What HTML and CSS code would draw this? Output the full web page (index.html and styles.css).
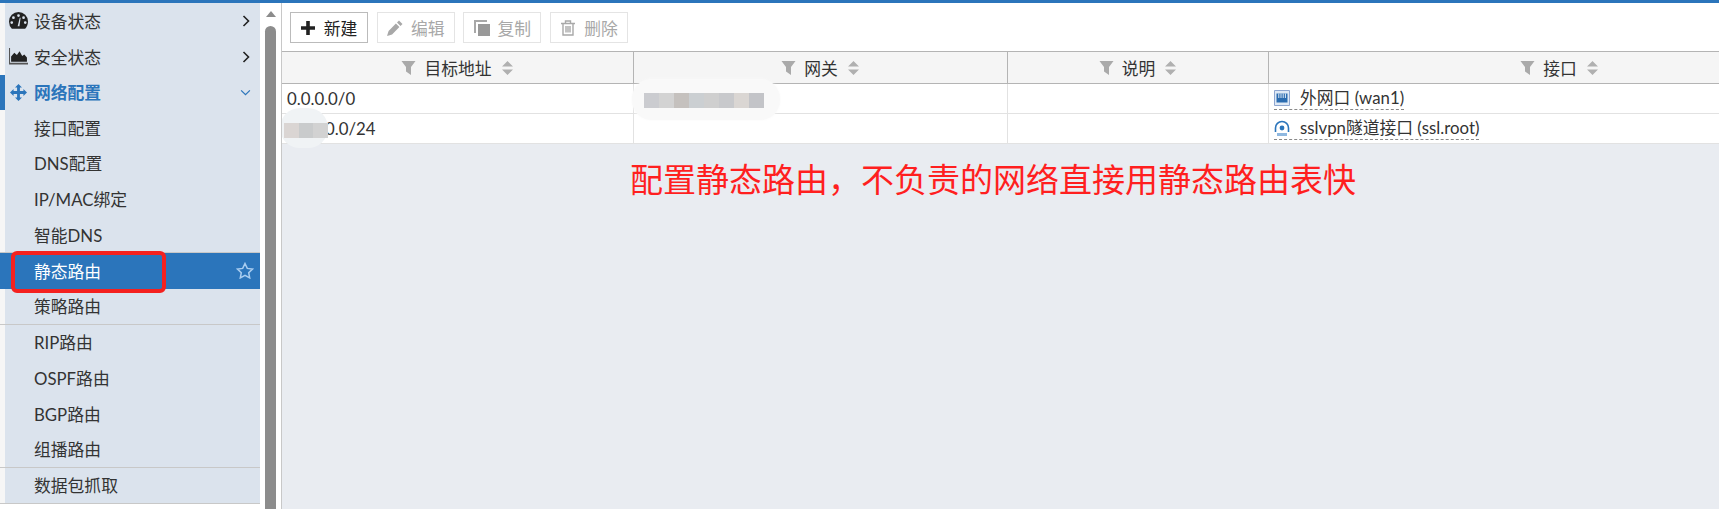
FILE: index.html
```html
<!DOCTYPE html>
<html lang="zh-CN">
<head>
  <meta charset="UTF-8" />
  <title>静态路由</title>
  <link rel="stylesheet" href="styles.css">
</head>
<body>
  <div class="top-bar"></div>
  <div class="app">

    <!-- Side menu -->
    <aside class="side-menu">
      <a class="menu-item top-level">
        <svg class="menu-icon" viewBox="0 0 18 16"><path fill="#222" fill-rule="evenodd" d="M9 0a9 9 0 0 1 9 9c0 2.600-1 5-2.700 6.800H2.700A9.800 9.800 0 0 1 0 9a9 9 0 0 1 9-9zM9 2a1.300 1.300 0 1 0 0 2.600A1.300 1.300 0 0 0 9 2zM4.200 4a1.300 1.300 0 1 0 0 2.600 1.300 1.300 0 0 0 0-2.600zM13.800 4a1.300 1.300 0 1 0 0 2.600 1.300 1.300 0 0 0 0-2.600zM2.600 8.600a1.300 1.300 0 1 0 0 2.600 1.300 1.300 0 0 0 0-2.600zM15.400 8.600a1.300 1.300 0 1 0 0 2.600 1.300 1.300 0 0 0 0-2.600zM8.200 13.400h1.700L11 5.500h-.8z"/></svg>
        <span>设备状态</span>
        <svg class="chevron" viewBox="0 0 8 12"><path fill="none" stroke="#222" stroke-width="1.600" d="M1.500 1l5 5-5 5"/></svg>
      </a>
      <a class="menu-item top-level">
        <svg class="menu-icon" viewBox="0 0 18 16"><path fill="#555" d="M0 0h1v14h17v1.500H0z"/><path fill="#222" d="M2 13V8l3-3.500 2.500 2L10 3l2.500 4.500 2-1.500L17 9v4z"/></svg>
        <span>安全状态</span>
        <svg class="chevron" viewBox="0 0 8 12"><path fill="none" stroke="#222" stroke-width="1.600" d="M1.500 1l5 5-5 5"/></svg>
      </a>
      <a class="menu-item top-level open">
        <svg class="menu-icon" viewBox="0 0 18 18"><path fill="#2b75bb" d="M9 0l3.700 3.800h-2.200v3.700h3.700V5.300L18 9l-3.800 3.700v-2.200h-3.700v3.700h2.200L9 18l-3.700-3.800h2.200v-3.700H3.800v2.200L0 9l3.800-3.700v2.200h3.700V3.800H5.300z"/></svg>
        <span>网络配置</span>
        <svg class="chevron chevron-down" viewBox="0 0 12 8"><path fill="none" stroke="#2b75bb" stroke-width="1.400" d="M1 1.500l5 5 5-5"/></svg>
      </a>
      <a class="menu-item">接口配置</a>
      <a class="menu-item">DNS配置</a>
      <a class="menu-item">IP/MAC绑定</a>
      <a class="menu-item">智能DNS</a>
      <div class="menu-sep"></div>
      <a class="menu-item selected">
        <span>静态路由</span>
        <svg class="star" viewBox="0 0 18 17"><path fill="none" stroke="#a9cdf0" stroke-width="1.500" d="M9 1.500l2.300 4.900 5.200.7-3.800 3.600 1 5.200L9 13.300l-4.700 2.600 1-5.200-3.800-3.600 5.200-.7z"/></svg>
      </a>
      <a class="menu-item">策略路由</a>
      <div class="menu-sep"></div>
      <a class="menu-item">RIP路由</a>
      <a class="menu-item">OSPF路由</a>
      <a class="menu-item">BGP路由</a>
      <a class="menu-item">组播路由</a>
      <div class="menu-sep"></div>
      <a class="menu-item">数据包抓取</a>
      <div class="menu-sep"></div>
      <div class="red-box"></div>
    </aside>

    <!-- Scrollbar -->
    <div class="scroll-track">
      <div class="scroll-up"></div>
      <div class="scroll-thumb"></div>
    </div>

    <!-- Content -->
    <main class="content">
      <div class="toolbar">
        <button class="btn">
          <svg class="btn-icon btn-icon-add" viewBox="0 0 14 14"><path fill="#222" d="M5.200 0h3.600v5.200H14v3.600H8.800V14H5.200V8.800H0V5.200h5.200z"/></svg>
          新建
        </button>
        <button class="btn disabled">
          <svg class="btn-icon" viewBox="0 0 16 16"><path fill="#a8a8a8" d="M12 .5l3.500 3.500-2 2L10 2.500zM8.900 3.600l3.500 3.500-7.300 7.300L0 16l1.600-5.100z"/></svg>
          编辑
        </button>
        <button class="btn disabled">
          <svg class="btn-icon" viewBox="0 0 16 16"><path fill="#a8a8a8" d="M0 0h13v2H2v11H0z"/><path fill="#999" d="M4 4h12v12H4z"/></svg>
          复制
        </button>
        <button class="btn disabled">
          <svg class="btn-icon" viewBox="0 0 14 16"><path fill="none" stroke="#a8a8a8" stroke-width="1.400" d="M0 3.500h14M4.500 3.500V1h5v2.500M2 3.500V15h10V3.500M5 6v6.500M7 6v6.500M9 6v6.500"/></svg>
          删除
        </button>
      </div>

      <div class="table-wrap">
        <table class="route-table">
          <colgroup>
            <col class="col-dest"><col class="col-gateway"><col class="col-desc"><col class="col-iface">
          </colgroup>
          <thead>
            <tr>
              <th><span class="th-inner"><svg class="funnel" viewBox="0 0 14 14"><path fill="#aaa" d="M0 0h14L9.500 6v8L4.500 10.500V6z"/></svg>目标地址<svg class="sort" viewBox="0 0 11 14"><path fill="#b0b0b0" d="M5.500 0L11 5.500H0zM0 8.500h11L5.500 14z"/></svg></span></th>
              <th><span class="th-inner"><svg class="funnel" viewBox="0 0 14 14"><path fill="#aaa" d="M0 0h14L9.500 6v8L4.500 10.500V6z"/></svg>网关<svg class="sort" viewBox="0 0 11 14"><path fill="#b0b0b0" d="M5.500 0L11 5.500H0zM0 8.500h11L5.500 14z"/></svg></span></th>
              <th><span class="th-inner"><svg class="funnel" viewBox="0 0 14 14"><path fill="#aaa" d="M0 0h14L9.500 6v8L4.500 10.500V6z"/></svg>说明<svg class="sort" viewBox="0 0 11 14"><path fill="#b0b0b0" d="M5.500 0L11 5.500H0zM0 8.500h11L5.500 14z"/></svg></span></th>
              <th><span class="th-inner"><svg class="funnel" viewBox="0 0 14 14"><path fill="#aaa" d="M0 0h14L9.500 6v8L4.500 10.500V6z"/></svg>接口<svg class="sort" viewBox="0 0 11 14"><path fill="#b0b0b0" d="M5.500 0L11 5.500H0zM0 8.500h11L5.500 14z"/></svg></span></th>
            </tr>
          </thead>
          <tbody>
            <tr>
              <td>0.0.0.0/0</td>
              <td></td>
              <td></td>
              <td>
                <span class="iface">
                  <svg class="iface-icon" viewBox="0 0 16 16"><path fill="#dfe9f5" stroke="#8ea6d0" d="M.5.500h15v15H.500z"/><path fill="#2b6cb0" d="M2.500 3.500h11v9h-11z"/><path fill="#dfe9f5" d="M4.300 3.500h1v4.500h-1zM6.500 3.500h1v4.500h-1zM8.700 3.500h1v4.500h-1zM10.900 3.500h1v4.500h-1z"/></svg>
                  外网口 (wan1)
                </span>
              </td>
            </tr>
            <tr>
              <td class="cell-masked">0.0/24</td>
              <td></td>
              <td></td>
              <td>
                <span class="iface">
                  <svg class="iface-icon" viewBox="0 0 16 16"><path fill="none" stroke="#2b75bb" stroke-width="1.600" d="M1.500 12V8a6.500 6.500 0 0 1 13 0v4"/><circle cx="8" cy="8" r="2.400" fill="#2b75bb"/><path fill="#8fb8e0" d="M3 13h10v3H3z"/></svg>
                  sslvpn隧道接口 (ssl.root)
                </span>
              </td>
            </tr>
          </tbody>
        </table>

        <!-- Blurred-out addresses -->
        <div class="mask mask-gateway">
          <i style="background:#cbccd0"></i><i style="background:#d3d3d3"></i><i style="background:#c5c1be"></i><i style="background:#cbcfd2"></i><i style="background:#cfcfcf"></i><i style="background:#c8c9cc"></i><i style="background:#dad6d3"></i><i style="background:#c3c4c8"></i>
        </div>
        <div class="mask mask-dest">
          <i style="background:#dad5d3"></i><i style="background:#c9cbcc"></i><i style="background:#d2d2d2"></i>
        </div>

        <div class="note">配置静态路由&#65292;不负责的网络直接用静态路由表快</div>
      </div>
    </main>
  </div>
</body>
</html>
```

FILE: styles.css
```css
* { margin: 0; padding: 0; box-sizing: border-box; }
html, body { height: 100%; overflow: hidden; }
body {
  font-family: Lato, "Noto Sans CJK SC", sans-serif;
  font-size: 16.8px;
  color: #333;
  background: #fff;
  display: flex;
  flex-direction: column;
}

.top-bar { height: 3px; background: #2b75bb; flex: none; }
.app { flex: 1; display: flex; min-height: 0; }

/* Side menu */
.side-menu { width: 260px; flex: none; position: relative; }
.menu-item {
  height: 35.75px;
  display: flex;
  align-items: center;
  padding: 0 10px 1px 29px;
  background: #dbe3ed;
  border-left: 5px solid #f6f6f6;
}
.menu-item.top-level { padding-bottom: 0; }
.menu-icon { width: 19px; height: 17px; margin-left: -25px; margin-right: 6px; flex: none; }
.menu-item.open { color: #2b75bb; font-weight: 700; border-left-color: #2b75bb; }
.menu-item.selected { color: #fff; background: #2b75bb; border-left-color: #2b75bb; }
.menu-sep { height: 1px; margin-top: -1px; background: #c8c8c8; }
.chevron { width: 8px; height: 12px; margin-left: auto; }
.chevron-down { width: 11px; height: 7px; margin-right: -1px; }
.star { width: 18px; height: 17px; margin-left: auto; margin-right: -4px; }
.red-box {
  position: absolute;
  left: 11px; top: 248px;
  width: 155px; height: 42px;
  border: 4px solid #f4211f;
  border-radius: 6px;
}

/* Scrollbar */
.scroll-track {
  width: 22px;
  flex: none;
  padding: 0 5px;
  border-right: 1px solid #c8c8c8;
  display: flex;
  flex-direction: column;
  align-items: center;
}
.scroll-up {
  width: 0; height: 0;
  margin-top: 8px;
  border-left: 5px solid transparent;
  border-right: 5px solid transparent;
  border-bottom: 6px solid #8c8c8c;
}
.scroll-thumb {
  flex: 1;
  width: 11px;
  margin-top: 9px;
  background: #8c8c8c;
  border-radius: 6px 6px 0 0;
}

/* Content */
.content { flex: 1; min-width: 0; display: flex; flex-direction: column; background: #e9ecf1; overflow: hidden; }
.toolbar { height: 48px; flex: none; background: #fff; display: flex; gap: 8.7px; padding: 9px 0 0 8px; }
.btn {
  width: 78px; height: 31px;
  display: flex; align-items: center; justify-content: center; gap: 8px;
  font: inherit;
  color: #222;
  background: #fff;
  border: 1px solid #bbb;
}
.btn.disabled { color: #a8a8a8; border-color: #e4e4e4; }
.btn-icon { width: 16px; height: 16px; }
.btn-icon-add { width: 14px; height: 14px; margin-right: 1px; }

.table-wrap { flex: 1; position: relative; }
.route-table { width: 1569px; table-layout: fixed; border-collapse: separate; border-spacing: 0; background: #fff; }
.col-dest { width: 352px; }
.col-gateway { width: 374px; }
.col-desc { width: 261px; }
.col-iface { width: 582px; }
.route-table th {
  height: 33px;
  font-weight: 400;
  background: #f5f5f5;
  border-top: 1px solid #b4b4b4;
  border-bottom: 1px solid #b4b4b4;
  border-right: 1px solid #b4b4b4;
}
.route-table td {
  height: 30px;
  padding-left: 5px;
  border-bottom: 1px solid #e2e2e2;
  border-right: 1px solid #e2e2e2;
}
.th-inner { display: inline-flex; align-items: center; padding-right: 1px; }
.funnel { width: 15px; height: 14px; margin-right: 8px; }
.sort { width: 11px; height: 14px; margin-left: 10px; }
.cell-masked { padding-left: 43px !important; }
.iface { display: inline-flex; align-items: center; gap: 10px; border-bottom: 1px dashed #888; line-height: 22px; }
.iface-icon { width: 16px; height: 16px; }

/* Overlays */
.mask { position: absolute; display: flex; align-items: flex-end; background: #f9f9f9; box-shadow: 0 0 3px #f9f9f9; }
.mask i { width: 15px; height: 15px; }
.mask-gateway { left: 350px; top: 28px; width: 148px; height: 41px; padding: 0 12px 12px; border-radius: 20px; }
.mask-dest { left: -2px; top: 57px; width: 48px; height: 40px; padding: 0 0 10px 4px; border-radius: 24px; background: #f0f3f5; box-shadow: none; }
.note {
  position: absolute;
  left: 348px; top: 105px;
  font-family: "Noto Sans CJK SC", sans-serif;
  font-size: 33px;
  line-height: 44px;
  color: #ff1f1f;
  white-space: nowrap;
}
```
